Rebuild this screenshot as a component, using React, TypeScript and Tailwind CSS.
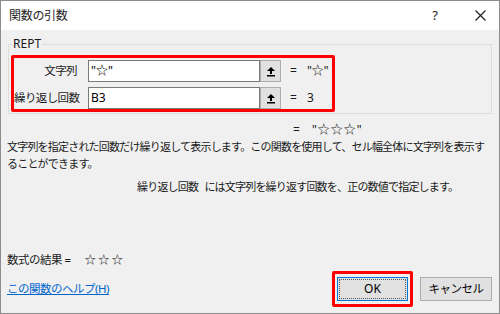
import React from "react";

/**
 * 関数の引数 (REPT) ダイアログ — Excel の引数入力ウィンドウ。
 */

const font = { fontFamily: '"Noto Sans", "Noto Sans CJK JP", sans-serif' };

type Arg = {
  label: string;
  value: string;
  result: string;
};

const args: Arg[] = [
  { label: "文字列", value: '"☆"', result: '"☆"' },
  { label: "繰り返し回数", value: "B3", result: "3" },
];

function PickIcon() {
  return (
    <svg width="10" height="11" viewBox="0 0 10 11" className="block">
      <path d="M5 1 L9 5 L6 5 L6 8 L4 8 L4 5 L1 5 Z" fill="#000" />
      <rect x="1" y="9" width="8" height="1.5" fill="#000" />
    </svg>
  );
}

function ArgRow({ arg }: { arg: Arg }) {
  return (
    <div className="flex items-center h-[22px]">
      <div className="w-[64px] text-right text-[11.5px] tracking-[-0.6px] text-[#1a1a1a] whitespace-nowrap pr-[1px]">
        {arg.label}
      </div>
      <div className="ml-[10px] flex h-full">
        <div className="w-[172px] h-full bg-white border border-[#7a7a7a] flex items-center px-[2px] text-[12px] text-black">
          {arg.value}
        </div>
        <div className="w-[21px] h-full bg-[#e1e1e1] border border-[#adadad] flex items-center justify-center">
          <PickIcon />
        </div>
      </div>
      <div className="ml-[9px] text-[12px] text-[#1a1a1a] flex gap-[10px]">
        <span>=</span>
        <span>{arg.result}</span>
      </div>
    </div>
  );
}

export default function App() {
  return (
    <div
      className="w-[500px] h-[314px] bg-[#f0f0f0] border border-[#8c8c8c] flex flex-col overflow-hidden"
      style={font}
    >
      {/* title bar */}
      <div className="h-[29px] bg-white flex items-center pl-[8px] pr-[13px] shrink-0">
        <span className="text-[12px] tracking-[-0.3px] text-[#222]">関数の引数</span>
        <span className="ml-auto text-[13px] text-[#222] mr-[37px]">?</span>
        <svg width="11" height="11" viewBox="0 0 11 11">
          <path d="M0.5 0.5 L10.5 10.5 M10.5 0.5 L0.5 10.5" stroke="#222" strokeWidth="1.2" />
        </svg>
      </div>

      <div className="flex-1 flex flex-col px-[6px] text-[#1a1a1a]">
        {/* group box */}
        <div className="relative mt-[14px] ml-[1px] w-[484px] h-[70px] border border-[#dcdcdc]">
          <span className="absolute -top-[9px] left-[3px] px-[1px] bg-[#f0f0f0] text-[12px] leading-[16px]">
            REPT
          </span>
          <div className="ml-[2px] mt-[10px] w-[324px] h-[57px] border-[3px] border-[#ff0000] rounded-[2px] pt-[2px] flex flex-col gap-[5px]">
            {args.map((a) => (
              <ArgRow key={a.label} arg={a} />
            ))}
          </div>
        </div>

        <div className="mt-[8px] pl-[286px] text-[12px] leading-[16px] flex gap-[12px]">
          <span>=</span>
          <span className="tracking-[1px]">"☆☆☆"</span>
        </div>

        <div className="mt-[0px] text-[11px] tracking-[-0.8px] leading-[17px] whitespace-nowrap">
          <div>文字列を指定された回数だけ繰り返して表示します。この関数を使用して、セル幅全体に文字列を表示す</div>
          <div>ることができます。</div>
        </div>

        <div className="mt-[6px] pl-[130px] text-[11px] tracking-[-0.8px] leading-[17px] whitespace-nowrap">
          繰り返し回数&nbsp;&nbsp;&nbsp;には文字列を繰り返す回数を、正の数値で指定します。
        </div>

        <div className="mt-[56px] text-[11.5px] tracking-[-0.5px] leading-[17px] whitespace-nowrap flex">
          <span>数式の結果 =</span>
          <span className="ml-[14px] tracking-[2px]">☆☆☆</span>
        </div>

        <div className="mt-[3px] flex items-center">
          <a className="text-[11.5px] tracking-[-0.5px] text-[#0066cc] underline whitespace-nowrap">
            この関数のヘルプ(H)
          </a>
          <div className="ml-auto mr-[1px] flex items-center gap-[7px]">
            <div className="w-[81px] h-[36px] border-[3px] border-[#ff0000] rounded-[2px] flex items-center justify-center">
              <div className="w-[71px] h-[24px] border border-[#0078d7] bg-[#e1e1e1] flex items-center justify-center p-[1px]">
                <div className="w-full h-full border border-dotted border-[#555] flex items-center justify-center text-[12px] text-black">
                  OK
                </div>
              </div>
            </div>
            <div className="w-[72px] h-[24px] border border-[#adadad] bg-[#e1e1e1] flex items-center justify-center text-[11.5px] tracking-[-0.5px] text-black">
              キャンセル
            </div>
          </div>
        </div>
      </div>
    </div>
  );
}
